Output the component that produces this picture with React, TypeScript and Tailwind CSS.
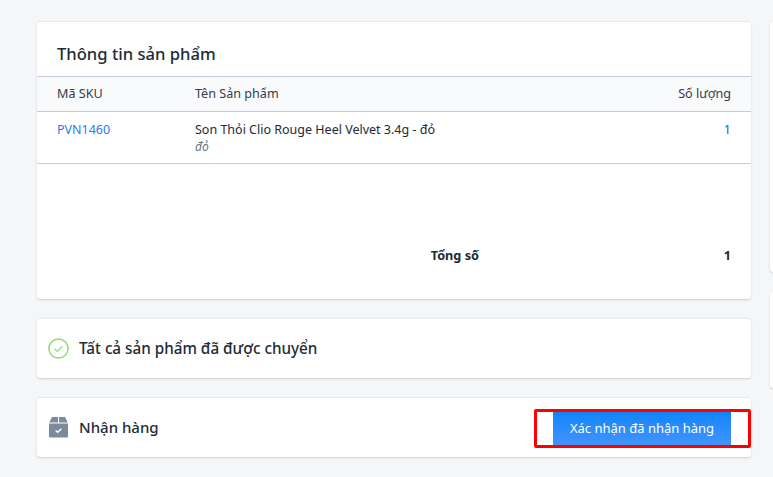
import React from 'react';

const font = "font-['Noto_Sans','Open_Sans',sans-serif]";

const Card: React.FC<{ className?: string; children: React.ReactNode }> = ({ className = '', children }) => (
  <section className={`bg-white rounded-[3px] border-t border-[#e8eaee] shadow-[0_1px_2px_rgba(63,63,68,0.22)] ${className}`}>
    {children}
  </section>
);

export default function App() {
  return (
    <div className={`${font} h-[477px] w-[773px] overflow-hidden bg-[#f4f6f8] text-[#212b36] flex`}>
      <main className="w-[714px] ml-[37px] pt-[21px] flex flex-col shrink-0">
        {/* Products */}
        <Card className="h-[278px] flex flex-col">
          <h2 className="h-[54px] pl-[20px] pt-[20px] text-[16.6px] leading-[24px] font-medium">Thông tin sản phẩm</h2>
          <div className="h-[36px] flex items-center px-[20px] bg-[#f9fafb] border-y border-[#c4cdd5] text-[12.6px] text-[#333c48]">
            <span className="w-[138px]">Mã SKU</span>
            <span className="flex-1">Tên Sản phẩm</span>
            <span>Số lượng</span>
          </div>
          <div className="h-[52px] flex px-[20px] pt-[9px] border-b border-[#c4cdd5] text-[12.5px] leading-[18px]">
            <span className="w-[138px] text-[#1f7cf0]">PVN1460</span>
            <div className="flex-1">
              <div>Son Thỏi Clio Rouge Heel Velvet 3.4g - đỏ</div>
              <div className="text-[12px] leading-[16px] italic text-[#637381]">đỏ</div>
            </div>
            <span className="text-[#006fbb]">1</span>
          </div>
          <div className="flex-1 flex items-center justify-end pr-[20px] pt-[49px] text-[12.7px] font-bold">
            <span className="w-[293px]">Tổng số</span>
            <span>1</span>
          </div>
        </Card>

        {/* Shipped status */}
        <Card className="mt-[19px] h-[60px] flex items-center pl-[11px] gap-[10px]">
          <svg width="21" height="21" viewBox="0 0 21 21" fill="none" stroke="#8fdc70" aria-hidden="true">
            <circle cx="10.5" cy="10.5" r="9.6" strokeWidth="1.5" />
            <path d="M6.5 10.8l2.8 2.7 5.2-5.4" strokeWidth="1.2" />
          </svg>
          <span className="text-[15.25px] font-medium">Tất cả sản phẩm đã được chuyển</span>
        </Card>

        {/* Receive */}
        <Card className="mt-[19px] h-[60px] flex items-center pl-[12px]">
          <svg width="19" height="21" viewBox="0 0 19 21" fill="#7c8b9b" aria-hidden="true">
            <path d="M3 0h6v5.5H0.3zM10 0h6l2.7 5.5H10zM0 6.5h19v13a1 1 0 0 1-1 1H1a1 1 0 0 1-1-1z" />
            <path d="M6.6 13.4l2 1.9 3.8-3.6" fill="none" stroke="#fff" strokeWidth="1.4" />
          </svg>
          <span className="ml-[11px] text-[15px] font-medium">Nhận hàng</span>
          <div className="ml-auto mt-[2px] w-[217px] h-[39px] border-[3px] border-[#f00] bg-white rounded-[2px] pl-[16px]">
            <button className="block w-[178px] h-full bg-gradient-to-b from-[#0b84fd] to-[#3f94fb] text-white text-[13px]">
              Xác nhận đã nhận hàng
            </button>
          </div>
        </Card>
      </main>

      {/* Side column, cut off by the window */}
      <aside className="ml-[19px] pt-[22px] flex flex-col gap-[21px] flex-1">
        <div className="h-[250px] bg-white rounded-l-[3px] shadow-[0_1px_2px_rgba(63,63,68,0.22)]" />
        <div className="h-[95px] bg-white rounded-l-[3px] shadow-[0_1px_2px_rgba(63,63,68,0.22)]" />
      </aside>
    </div>
  );
}
